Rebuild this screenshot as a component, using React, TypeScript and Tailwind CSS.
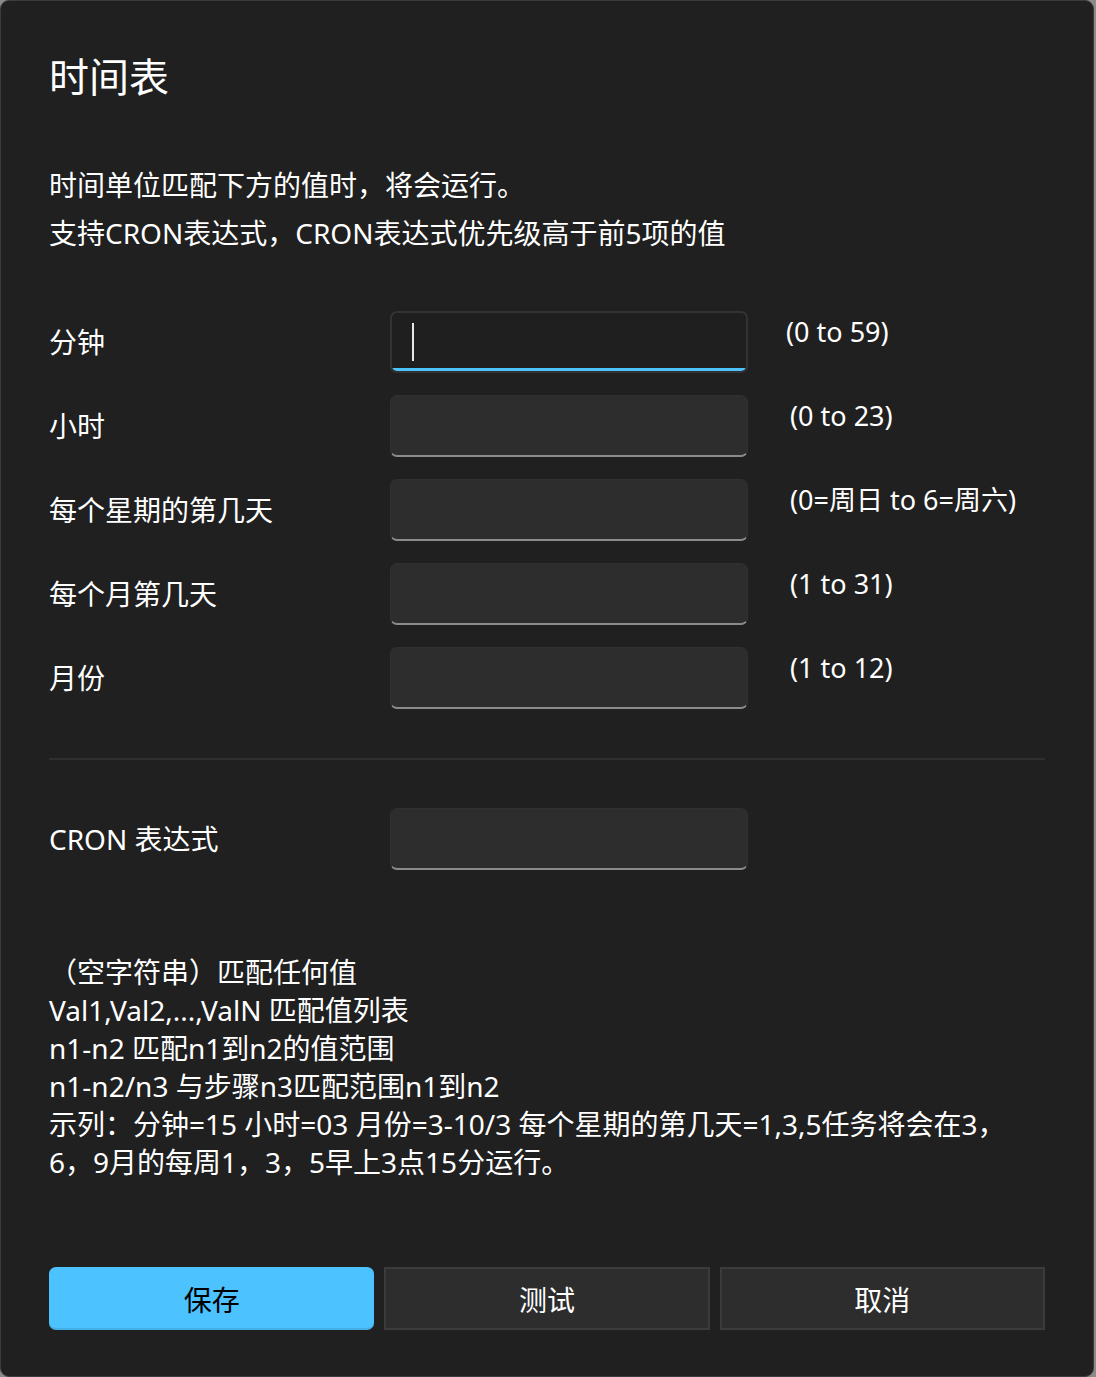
const font = { fontFamily: '"Noto Sans", "Noto Sans CJK SC", sans-serif' };

const rows = [
  { label: "分钟", hint: "(0 to 59)", focused: true },
  { label: "小时", hint: "(0 to 23)" },
  { label: "每个星期的第几天", hint: "(0=周日 to 6=周六)" },
  { label: "每个月第几天", hint: "(1 to 31)" },
  { label: "月份", hint: "(1 to 12)" },
];

const notes = [
  "（空字符串）匹配任何值",
  "Val1,Val2,...,ValN 匹配值列表",
  "n1-n2 匹配n1到n2的值范围",
  "n1-n2/n3 与步骤n3匹配范围n1到n2",
  "示列：分钟=15 小时=03 月份=3-10/3 每个星期的第几天=1,3,5任务将会在3，",
  "6，9月的每周1，3，5早上3点15分运行。",
];

const TextBox = ({ focused }: { focused?: boolean }) =>
  focused ? (
    <div className="relative h-[62px] w-[358px] rounded-[7px] border-2 border-[#333333] bg-[#1f1f1f] overflow-hidden">
      <div className="absolute left-[20px] top-[10px] h-[38px] w-[2px] bg-[#e6e6e6]" />
      <div className="absolute bottom-0 left-0 right-0 h-[3px] bg-[#4cc2ff]" />
    </div>
  ) : (
    <div className="h-[62px] w-[358px] rounded-[7px] border border-[#303030] border-b-2 border-b-[#8b8b8b] bg-[#2d2d2d]" />
  );

export default function App() {
  return (
    <div className="min-h-screen bg-[#8a8a8a]" style={font}>
      <div className="flex h-[1377px] w-[1094px] flex-col rounded-[9px] border border-[#3c3c3c] bg-[#202020] px-[48px] text-white">
        <h1 className="mt-[48px] text-[40px] leading-[56px]">时间表</h1>

        <div className="mt-[56px] text-[28px] leading-[48px]">
          <p>时间单位匹配下方的值时，将会运行。</p>
          <p>支持CRON表达式，CRON表达式优先级高于前5项的值</p>
        </div>

        <div className="mt-[54px] flex flex-col gap-[22px]">
          {rows.map((r, i) => (
            <div key={i} className="flex h-[62px] items-center">
              <div className="w-[341px] text-[28px]">{r.label}</div>
              <TextBox focused={r.focused} />
              <div className={`self-start text-[27px] leading-[42px] ${i === 0 ? "pl-[38px]" : "pl-[42px]"}`}>
                {r.hint}
              </div>
            </div>
          ))}
        </div>

        <div className="mt-[49px] h-[2px] bg-[#2f2f2f]" />

        <div className="mt-[47px] flex h-[63px] items-center">
          <div className="w-[341px] text-[28px]">CRON 表达式</div>
          <TextBox />
        </div>

        <div className="mt-[83px] text-[28px] leading-[38px]">
          {notes.map((n, i) => (
            <p key={i}>{n}</p>
          ))}
        </div>

        <div className="mt-auto mb-[46px] grid grid-cols-3 gap-[10px]">
          <button className="h-[63px] rounded-[7px] border-b-2 border-b-[#44aee6] bg-[#4cc2ff] text-[28px] leading-[66px] text-black">保存</button>
          <button className="h-[63px] border-2 border-[#3b3b3b] bg-[#2d2d2d] text-[28px] leading-[62px] text-white">测试</button>
          <button className="h-[63px] border-2 border-[#3b3b3b] bg-[#2d2d2d] text-[28px] leading-[62px] text-white">取消</button>
        </div>
      </div>
    </div>
  );
}
